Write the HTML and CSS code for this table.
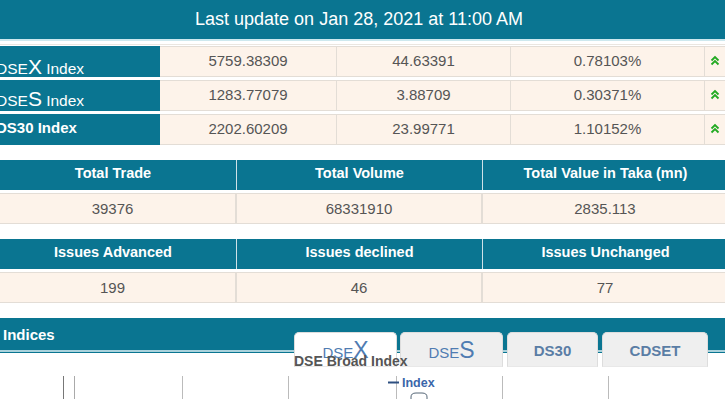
FILE: index.html
```html
<!DOCTYPE html>
<html>
<head>
<meta charset="utf-8">
<link rel="stylesheet" href="styles.css">
</head>
<body>
<div class="page">
  <div class="updated">Last update on Jan 28, 2021 at 11:00 AM</div>

  <div class="index-rows">
    <div class="irow">
      <div class="lab lab-x">DSE<span class="big">X</span> Index</div>
      <div class="val">5759.38309</div>
      <div class="val">44.63391</div>
      <div class="val">0.78103%</div>
      <div class="val arrow"><svg width="10" height="11" viewBox="0 0 10 11"><polyline points="1.5,5.5 5,2 8.5,5.5"/><polyline points="1.5,9.5 5,6 8.5,9.5"/></svg></div>
    </div>
    <div class="irow">
      <div class="lab lab-s">DSE<span class="big">S</span> Index</div>
      <div class="val">1283.77079</div>
      <div class="val">3.88709</div>
      <div class="val">0.30371%</div>
      <div class="val arrow"><svg width="10" height="11" viewBox="0 0 10 11"><polyline points="1.5,5.5 5,2 8.5,5.5"/><polyline points="1.5,9.5 5,6 8.5,9.5"/></svg></div>
    </div>
    <div class="irow">
      <div class="lab lab-30">DS30 Index</div>
      <div class="val">2202.60209</div>
      <div class="val">23.99771</div>
      <div class="val">1.10152%</div>
      <div class="val arrow"><svg width="10" height="11" viewBox="0 0 10 11"><polyline points="1.5,5.5 5,2 8.5,5.5"/><polyline points="1.5,9.5 5,6 8.5,9.5"/></svg></div>
    </div>
  </div>

  <div class="stats">
    <div class="sh">Total Trade</div>
    <div class="sh">Total Volume</div>
    <div class="sh">Total Value in Taka (mn)</div>
    <div class="sd">39376</div>
    <div class="sd">68331910</div>
    <div class="sd">2835.113</div>
  </div>

  <div class="stats">
    <div class="sh">Issues Advanced</div>
    <div class="sh">Issues declined</div>
    <div class="sh">Issues Unchanged</div>
    <div class="sd">199</div>
    <div class="sd">46</div>
    <div class="sd">77</div>
  </div>

  <section class="indices">
    <div class="bar">Indices</div>
    <div class="tabs">
      <div class="tab active">DSE<span class="tbig">X</span></div>
      <div class="tab">DSE<span class="tbig">S</span></div>
      <div class="tab tab-b tab-30">DS30</div>
      <div class="tab tab-b tab-c">CDSET</div>
    </div>
    <div class="chart">
      <div class="chart-title">DSE Broad Index</div>
      <svg class="grid" width="738" height="47" viewBox="0 0 738 47">
        <line class="g1" x1="73.5" y1="24" x2="73.5" y2="47"/>
        <line class="g2" x1="84.5" y1="24" x2="84.5" y2="47"/>
        <line class="g3" x1="192.5" y1="24" x2="192.5" y2="47"/>
        <line class="g3" x1="298.5" y1="24" x2="298.5" y2="47"/>
        <line class="g3" x1="406.5" y1="24" x2="406.5" y2="47"/>
        <line class="g3" x1="512.5" y1="24" x2="512.5" y2="47"/>
        <line class="g3" x1="618.5" y1="24" x2="618.5" y2="47"/>
        <line class="legend-line" x1="398" y1="30.5" x2="409" y2="30.5"/>
        <text class="legend-text" x="412" y="35">Index</text>
        <path class="nav" d="M421 47 V45 Q421 41 426 41 H432 Q437 41 437 45 V47"/>
      </svg>
    </div>
  </section>
</div>
</body>
</html>
```

FILE: styles.css
```css
html, body {
  margin: 0;
  padding: 0;
  background: #ffffff;
  overflow: hidden;
}
body {
  font-family: "Liberation Sans", Arial, sans-serif;
}
.page {
  width: 738px;
  margin-left: -10px;
}
.updated {
  height: 39px;
  line-height: 39px;
  background: #0a7591;
  color: #ffffff;
  font-size: 18px;
  text-align: center;
  border-bottom: 2px solid #cde8ee;
}
.index-rows {
  display: flex;
  flex-direction: column;
  gap: 3px;
  margin-top: 3px;
  border-top: 1px solid #ebe6e0;
  padding-top: 1px;
}
.irow {
  display: grid;
  grid-template-columns: 170px 177px 174px 194px 1fr;
  height: 31px;
}
.lab {
  background: #0a7591;
  color: #ffffff;
  font-size: 15.5px;
  line-height: 1;
  padding-left: 6px;
  white-space: nowrap;
}
.lab .big {
  font-size: 21px;
}
.lab-x { padding-top: 10px; }
.lab-s { padding-top: 8px; }
.lab-30 { padding-top: 6px; font-weight: bold; font-size: 15px; }
.val {
  background: #fdf3ea;
  border: 1px solid #e3ddd6;
  border-left: none;
  color: #555555;
  font-size: 15px;
  line-height: 27px;
  text-align: center;
}
.arrow {
  text-align: left;
  padding-left: 5px;
  padding-top: 8px;
  line-height: 0;
}
.arrow polyline {
  fill: none;
  stroke: #22aa22;
  stroke-width: 1.8;
}
.stats {
  display: grid;
  grid-template-columns: repeat(3, 246px);
  row-gap: 3px;
  margin-top: 15px;
}
.sh {
  background: #0a7591;
  color: #ffffff;
  font-weight: bold;
  font-size: 14.5px;
  height: 30px;
  line-height: 26px;
  text-align: center;
  border-left: 1px solid #cfe2e8;
  box-sizing: border-box;
}
.sh:first-child {
  border-left: none;
}
.sd {
  background: #fdf3ea;
  border: 1px solid #e3ddd6;
  border-left: none;
  height: 31px;
  box-sizing: border-box;
  line-height: 29px;
  color: #555555;
  font-size: 15px;
  text-align: center;
}
.sd:nth-child(5), .sd:nth-child(6) {
  border-left: 1px solid #e3ddd6;
}
.indices {
  position: relative;
  margin-top: 15px;
}
.bar {
  height: 32px;
  line-height: 33px;
  background: #0a7591;
  color: #ffffff;
  font-size: 15px;
  font-weight: bold;
  padding-left: 13px;
  border-bottom: 2px solid #a9d2dc;
  box-shadow: 0 1px 0 #0a7591;
}
.tabs {
  position: absolute;
  left: 304px;
  top: 14px;
  display: flex;
  gap: 4px;
}
.tab {
  width: 103px;
  height: 35px;
  box-sizing: border-box;
  background: #efefef;
  border: 1px solid #dddddd;
  border-bottom-color: #e8e8e8;
  border-radius: 5px 5px 0 0;
  text-align: center;
  color: #4f7cb2;
  font-size: 15px;
  line-height: 1;
  padding-top: 6px;
}
.tab .tbig {
  font-size: 23px;
}
.tab.active {
  background: #ffffff;
  width: 103px;
  margin-right: -1px;
}
.tab-b {
  font-weight: bold;
  color: #5a7da5;
  padding-top: 10px;
}
.tab-30 { width: 91px; }
.tab-c { width: 106px; }
.chart {
  position: relative;
  height: 47px;
}
.chart-title {
  position: absolute;
  left: 304px;
  top: 2px;
  font-size: 14px;
  font-weight: bold;
  color: #555555;
  line-height: 14px;
}
.grid {
  position: absolute;
  left: 0;
  top: 0;
}
.grid line {
  stroke-width: 1;
}
.grid .g1 { stroke: #777777; }
.grid .g2 { stroke: #aaaaaa; }
.grid .g3 { stroke: #bbbbbb; }
.grid .legend-line {
  stroke: #2d4f80;
  stroke-width: 2;
}
.grid .legend-text {
  font-family: "Liberation Sans", Arial, sans-serif;
  font-size: 12.5px;
  font-weight: bold;
  fill: #3a66aa;
}
.grid .nav {
  fill: none;
  stroke: #556677;
  stroke-width: 1;
}
```
